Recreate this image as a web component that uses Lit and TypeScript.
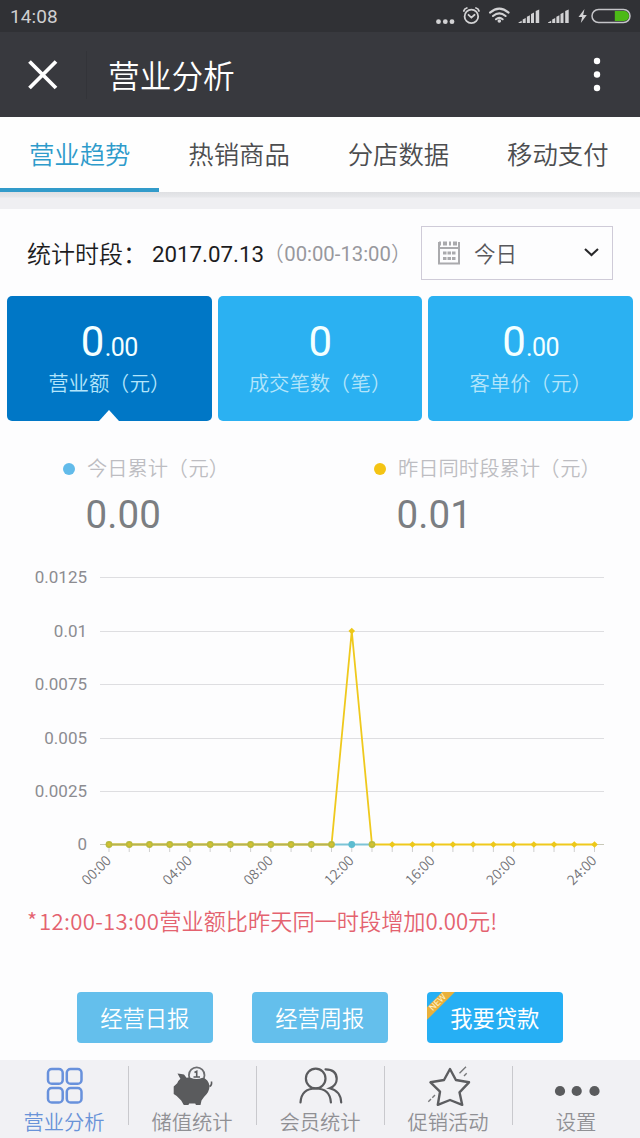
import { LitElement, html, svg, css } from "lit";
import { customElement } from "lit/decorators.js";

const HOURS = Array.from({ length: 25 }, (_, i) => i);
const px = (h: number) => 109 + h * 20.23;
const BASE = 844.5;
const PEAK = 631;

@customElement("status-bar")
class StatusBar extends LitElement {
  static styles = css`
    :host { display: flex; height: 32px; background: #303135; justify-content: space-between; align-items: center; color: #cfcfd1; font-family: Roboto, sans-serif; font-size: 19px; }
    .time { padding-left: 10px; letter-spacing: 0.1px; }
    svg { display: block; }
  `;
  render() {
    return html`<span class="time">14:08</span>
      <svg width="210" height="32" viewBox="430 0 210 32" fill="#d2d2d4">
        <circle cx="438.5" cy="21.7" r="2.4"/><circle cx="445.3" cy="21.7" r="2.4"/><circle cx="452" cy="21.7" r="2.4"/>
        <g fill="none" stroke="#d2d2d4" stroke-width="1.8" stroke-linecap="round">
          <circle cx="471.4" cy="16.4" r="6.8"/>
          <path d="M468.5 14.8l2.9 2.8 3.2-2.8M463.8 11q.6-2.4 3-3M476 8q2.4.6 3 3"/>
          <path d="M490 12.6q9.3-8 18.6 0M493 16q6.3-5.4 12.6 0M496 19.2q3.3-2.8 6.6 0" stroke-width="2.1"/>
        </g>
        <circle cx="499.3" cy="21" r="1.8"/>
        ${[518.5, 548].map(x => svg`<path d="M${x} 23v-.6l3.200-1.700v2.300zM${x + 4.200} 23v-3.500l3-1.500v5zM${x + 8.400} 23v-6.300l3-1.500v7.800zM${x + 12.500} 23v-9l3-1.500v10.500zM${x + 17.200} 23v-12l3.500-1.500v13.500z"/>`)}
        <path d="M584.500 9l-6 8h3.600l-1.300 6 6-8h-3.600z"/>
        <rect x="592" y="9.500" width="38" height="13" rx="6.500" fill="none" stroke="#c4c4c8" stroke-width="1.500"/>
        <path d="M614.800 11h9.200a5 5 0 0 1 0 10h-9.200z" fill="#4cb916"/>
      </svg>`;
  }
}

@customElement("nav-bar")
class NavBar extends LitElement {
  static styles = css`
    :host { display: flex; height: 85px; background: #38393e; align-items: center; color: #fff; }
    .divider { width: 1px; height: 48px; background: #333439; margin: 0 21px 0 0; }
    .title { flex: 1; font-size: 31.700px; line-height: 46px; padding-top: 6px; font-weight: 350; }
    svg { display: block; }
  `;
  render() {
    return html`<svg width="86" height="85"><path d="M29.500 29.500l26.500 26.500M56 29.500l-26.500 26.500" stroke="#fff" stroke-width="3.800" fill="none"/></svg>
      <div class="divider"></div><div class="title">营业分析</div>
      <svg width="60" height="85" fill="#fff"><circle cx="17" cy="29" r="3.200"/><circle cx="17" cy="42.500" r="3.200"/><circle cx="17" cy="56" r="3.200"/></svg>`;
  }
}

@customElement("trend-chart")
class TrendChart extends LitElement {
  static styles = css`
    :host { display: block; height: 334px; }
    svg { display: block; }
    .y { font: 17px Roboto, sans-serif; fill: #8c8c91; text-anchor: end; }
    .x { font: 350 14px "Noto Sans CJK SC", sans-serif; fill: #737377; text-anchor: end; }
  `;
  render() {
    const levels: [string, number][] = [["0.0125", 577.500], ["0.01", 631.500], ["0.0075", 684.500], ["0.005", 738.500], ["0.0025", 791.500], ["0", 844.500]];
    const line = HOURS.map(h => `${px(h)},${h === 12 ? PEAK : BASE}`).join(" ");
    return html`<svg width="640" height="334" viewBox="0 562 640 334">
      ${levels.map(([t, y]) => svg`<text class="y" x="87" y=${y + 5.500}>${t}</text>${t === "0" ? "" : svg`<path d="M100 ${y}H604" stroke="#dedee1"/>`}`)}
      ${HOURS.map(h => svg`<path d="M${px(h)} 845v7" stroke="#cfcfcf"/>`)}
      <path d="M100 ${BASE}H604" stroke="#c8c8b8"/>
      <polyline points=${line} fill="none" stroke="#efc91d" stroke-width="1.800"/>
      <path d="M109 ${BASE}H${px(11)}" stroke="#b3b455" stroke-width="1.800"/>
      <path d="M${px(11)} ${BASE}H${px(13)}" stroke="#7cc4d6" stroke-width="1.800"/>
      ${HOURS.filter(h => h < 14 && h !== 12).map(h => svg`<circle cx=${px(h)} cy=${BASE} r="3.400" fill="#b9ba3c"/><circle cx=${px(h)} cy=${BASE} r="1.800" fill="#d3c030"/>`)}
      <circle cx=${px(12)} cy=${BASE} r="3.400" fill="#5cbcd0"/>
      ${HOURS.filter(h => h === 12 || h > 13).map(h => svg`<path d="M${px(h) - 3.300} ${h === 12 ? PEAK : BASE}l3.300-3.300 3.300 3.300-3.300 3.300z" fill="#edc81a"/>`)}
      ${[0, 4, 8, 12, 16, 20, 24].map(h => svg`<text class="x" transform="translate(${px(h) + 3} 861.500) rotate(-45)">${String(h).padStart(2, "0")}:00</text>`)}
    </svg>`;
  }
}

const ICONS = {
  grid: svg`<g fill="none" stroke="#6891dc" stroke-width="2.500"><rect x="12" y="9" width="14.700" height="14.700" rx="3.800"/><rect x="30.800" y="9" width="14.700" height="14.700" rx="3.800"/><rect x="12" y="27.900" width="14.700" height="14.700" rx="3.800"/><rect x="30.800" y="27.900" width="14.700" height="14.700" rx="3.800"/></g>`,
  pig: svg`<circle cx="32.700" cy="15.200" r="7.800" fill="none" stroke="#6c6d70" stroke-width="1.800"/><path d="M30.500 12.500l2.200-1.200v5.700M29.500 17h6.500" fill="none" stroke="#5a5b5d" stroke-width="1.600"/><path d="M13.500 13.500q4 .5 6.500 1l2.500 3.200q2.500-.5 4 0 6 2.500 12 0 6 1.500 7 8.300 0 6-5.500 11l-2.500 3.500-1 4.500h-4.500l-.8-1.500h-6l-.8 1.500h-4.600l-2.600-4.500-4.500-4.500-3-2v-7.500l3.500-3.200q.8-2.500 3.200-4.500z" fill="#5a5b5d"/><path d="M45.500 26.500q2.500-1 2-5" fill="none" stroke="#5a5b5d" stroke-width="1.600"/>`,
  people: svg`<g fill="none" stroke="#5a5b5e" stroke-width="2.200" stroke-linecap="round"><circle cx="23.700" cy="18.500" r="9.800"/><path d="M8.500 42.500q.8-14 15.200-14t15.200 14M33.500 9.300q11.200 0 11.200 9.700 0 6.500-7 9.300 11 2.500 11.500 14.200"/></g>`,
  star: svg`<path d="M30 9l5.900 11 13.100 2.300-9.500 10 2.700 12.500-12.200-4.800-12.200 4.800 2.200-13.100-9.500-9.400 13.500-2.300z" fill="none" stroke="#5c5d60" stroke-width="2.400" stroke-linejoin="round"/><path d="M39.500 13.200l6.500-6.500M44 16l2.700-2.700M8.300 41.700l2.700-2.700M12.300 37.700l2.700-2.700" stroke="#77787a" stroke-width="1.400"/>`,
  more: svg`<g fill="#5a5b5d"><circle cx="12" cy="31" r="5.100"/><circle cx="28.700" cy="31" r="5.100"/><circle cx="46.500" cy="31" r="5.100"/></g>`,
};

@customElement("tab-bar")
class TabBar extends LitElement {
  static styles = css`
    :host { display: grid; grid-template-columns: repeat(5, 1fr); height: 78px; background: #f1f1f4; color: #909094; font-size: 20.300px; font-weight: 350; }
    .item { display: flex; flex-direction: column; align-items: center; position: relative; }
    .item + .item::before { content: ""; position: absolute; left: 0; top: 6px; height: 59px; width: 1px; background: #c9c9cd; }
    .on { color: #6993d8; }
    .label { line-height: 30px; white-space: nowrap; margin-top: 2px; }
    svg { display: block; }
  `;
  render() {
    const items = [[ICONS.grid, "营业分析"], [ICONS.pig, "储值统计"], [ICONS.people, "会员统计"], [ICONS.star, "促销活动"], [ICONS.more, "设置"]];
    return html`${items.map(([icon, label], i) => html`<div class="item ${i === 0 ? "on" : ""}"><svg width="56" height="46" viewBox="0 0 56 46">${icon}</svg><div class="label">${label}</div></div>`)}`;
  }
}

const bracket = (inner: string) => html`<span class="lp">（</span>${inner}<span class="rp">）</span>`;

@customElement("app-root")
class AppRoot extends LitElement {
  static styles = css`
    :host { display: flex; flex-direction: column; height: 1138px; overflow: hidden; background: #fdfdfe; font-family: Roboto, "Noto Sans CJK SC", sans-serif; }
    .tabs { display: grid; grid-template-columns: repeat(4, 159.400px); height: 75px; background: #fefefe; color: #4c4d4f; font-size: 25.400px; font-weight: 350; }
    .tab { text-align: center; line-height: 76px; box-sizing: border-box; height: 75px; }
    .tab.on { color: #2e9bcb; border-bottom: 4px solid #329bca; }
    .band { height: 17px; background: linear-gradient(#dfe0e3 0, #e6e7ea 5px, #efeff2 6px, #efeff2); }
    .period { display: flex; align-items: center; height: 55px; margin: 16px 27px 0 27px; }
    .name { width: 125px; font-size: 24px; color: #1c1c1e; white-space: nowrap; font-weight: 350; }
    .date { font-size: 22.300px; color: #1c1c1e; width: 112px; white-space: nowrap; padding-top: 2px; }
    .range { font-size: 20.300px; line-height: 24px; color: #98989d; flex: 1; white-space: nowrap; padding-top: 3px; }
    .select { width: 192px; height: 54px; box-sizing: border-box; border: 1px solid #cfcbd8; display: flex; align-items: center; font-size: 21.500px; color: #58585c; font-weight: 350; }
    .select span { flex: 1; margin-left: 13px; line-height: 54px; padding-top: 5px; }
    .select .cal { margin-left: 15px; }
    .select .arr { margin-right: 13px; }
    .cards { display: grid; grid-template-columns: repeat(3, 1fr); gap: 6px; padding: 0 7px; margin-top: 16px; height: 125px; }
    .card { background: #2bb1f2; border-radius: 5px; color: #fff; display: flex; flex-direction: column; align-items: center; position: relative; }
    .card.on { background: #0077c6; }
    .card.on::after { content: ""; position: absolute; bottom: 0; left: 50%; margin-left: -10px; border: 10px solid transparent; border-top: 0; border-bottom: 11px solid #fdfdfe; }
    .big { font-size: 42px; line-height: 48px; height: 48px; margin-top: 22px; color: #f4ffff; letter-spacing: -.6px; }
    .big small { font-size: 25px; line-height: 1; letter-spacing: -.5px; margin-left: .8px; }
    .cap { font-size: 20.400px; line-height: 30px; color: #b3e5fb; margin-top: 3px; font-weight: 350; white-space: nowrap; }
    .sums { display: grid; grid-template-columns: 311px 1fr; padding-left: 63px; margin-top: 31px; height: 110px; }
    .key { display: flex; align-items: center; font-size: 20.300px; line-height: 32px; color: #bdbdc2; font-weight: 350; white-space: nowrap; }
    .text { padding-top: 1px; }
    .dot { width: 12px; height: 12px; border-radius: 50%; background: #62bbea; margin: 0 12px 0 0; }
    .dot.y { background: #f4c414; }
    .sum { font-size: 38.500px; line-height: 48px; color: #7b7e82; margin: 6px 0 0 22.500px; letter-spacing: .1px; }
    .note { color: #e4626f; font: 350 22.200px/36px "Noto Sans CJK SC", sans-serif; margin: 6px 0 0 27px; height: 38px; white-space: nowrap; display: flex; }
    .note b { font-weight: 350; letter-spacing: .3px; }
    .note .ast { width: 12px; }
    .actions { display: flex; gap: 38.500px; margin: 52px 0 17px 76.500px; }
    .btn { width: 136.500px; height: 51px; border-radius: 4px; background: #64bfec; color: #fff; text-align: center; font-size: 22.300px; font-weight: 350; line-height: 54px; position: relative; overflow: hidden; }
    .btn.hot { background: #26aff4; font-weight: 400; }
    .ribbon { position: absolute; left: -20px; top: 5.500px; width: 62px; height: 9px; line-height: 9.500px; background: #e9b03a; color: #fff1c8; font-size: 9px; transform: rotate(-45deg); }
    svg { display: block; flex: none; }
    .lp, .rp { font-family: "Noto Sans CJK SC", sans-serif; font-feature-settings: "halt"; font-weight: 350; line-height: 0; }
    .lp { margin-left: .47em; margin-right: .03em; }
    .rp { margin-right: .5em; }
  `;
  render() {
    return html`<status-bar></status-bar><nav-bar></nav-bar>
      <div class="tabs">${["营业趋势", "热销商品", "分店数据", "移动支付"].map((t, i) => html`<div class="tab ${i ? "" : "on"}">${t}</div>`)}</div>
      <div class="band"></div>
      <div class="period"><span class="name">统计时段：</span><span class="date">2017.07.13</span><span class="range">${bracket("00:00-13:00")}</span>
        <div class="select"><svg class="cal" width="24" height="26" viewBox="0 0 24 26"><path d="M2 2v21.500h20V2M2 8h20" fill="none" stroke="#aaaaad" stroke-width="2"/><path d="M2 3.500h20" stroke="#aaaaad" stroke-width="4" stroke-dasharray="2 2 4 2"/><path d="M6 13h13M6 18.500h13" stroke="#aaaaad" stroke-width="3" stroke-dasharray="3.500 1"/></svg><span>今日</span>
        <svg class="arr" width="15" height="9"><path d="M1 1l6.500 6L14 1" fill="none" stroke="#28282a" stroke-width="2.100"/></svg></div></div>
      <div class="cards">
        <div class="card on"><div class="big">0<small>.00</small></div><div class="cap">营业额${bracket("元")}</div></div>
        <div class="card"><div class="big">0</div><div class="cap">成交笔数${bracket("笔")}</div></div>
        <div class="card"><div class="big">0<small>.00</small></div><div class="cap">客单价${bracket("元")}</div></div>
      </div>
      <div class="sums">
        <div><div class="key"><i class="dot"></i><div class="text">今日累计${bracket("元")}</div></div><div class="sum">0.00</div></div>
        <div><div class="key"><i class="dot y"></i><div class="text">昨日同时段累计${bracket("元")}</div></div><div class="sum">0.01</div></div>
      </div>
      <trend-chart></trend-chart>
      <div class="note"><span class="ast">*</span><b>12:00-13:00</b><span>营业额比昨天同一时段增加0.00元!</span></div>
      <div class="actions"><div class="btn">经营日报</div><div class="btn">经营周报</div><div class="btn hot"><div class="ribbon">NEW</div>我要贷款</div></div>
      <tab-bar></tab-bar>`;
  }
}
